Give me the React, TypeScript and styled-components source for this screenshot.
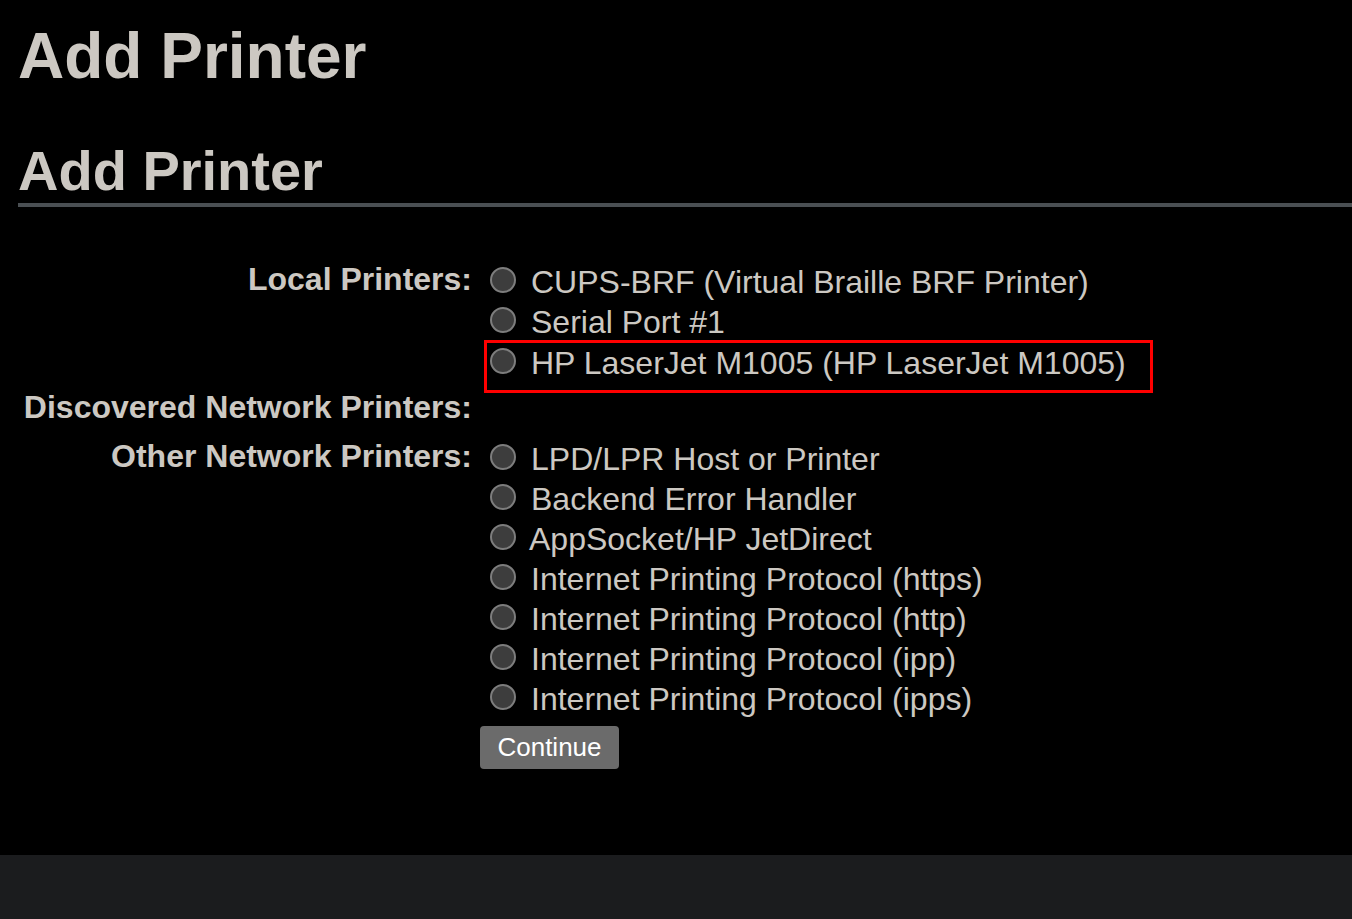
import React from "react";
import styled, { createGlobalStyle } from "styled-components";

const Global = createGlobalStyle`
  html, body { margin: 0; padding: 0; background: #1b1c1e; }
  body { font-family: "Liberation Sans", Arial, sans-serif; color: #ccc8c2; }
`;

const Page = styled.div`
  display: flex;
  flex-direction: column;
  min-height: 919px;
`;

const Main = styled.main`
  background: #000;
  height: 855px;
  display: flex;
  flex-direction: column;
`;

const Footer = styled.footer`
  flex: 1;
  background: #1b1c1e;
`;

const Title = styled.h1`
  margin: 24px 0 0 18px;
  font-size: 64px;
  line-height: 64px;
  font-weight: bold;
  color: #ccc8c2;
`;

const SubTitle = styled.h2`
  margin: 55px 0 0 18px;
  font-size: 56px;
  line-height: 56px;
  font-weight: bold;
  color: #ccc8c2;
`;

const Divider = styled.hr`
  margin: 4px 0 0 18px;
  height: 4px;
  border: none;
  background: #4a4f53;
`;

const Form = styled.form`
  margin-top: 52px;
  display: grid;
  grid-template-columns: 472px 1fr;
  column-gap: 8px;
  align-items: start;
`;

const Label = styled.div<{ $lh?: number; $mt?: number }>`
  text-align: right;
  font-weight: bold;
  font-size: 32px;
  line-height: ${(p) => p.$lh ?? 40}px;
  margin-top: ${(p) => p.$mt ?? 0}px;
  white-space: nowrap;
`;

const Options = styled.div<{ $mt?: number }>`
  display: flex;
  flex-direction: column;
  align-items: flex-start;
  padding-top: ${(p) => 3 + (p.$mt ?? 0)}px;
`;

const Option = styled.label<{ $pad?: number; $gap?: number }>`
  display: flex;
  align-items: flex-start;
  padding-left: ${(p) => p.$pad ?? 10}px;
  font-size: 32px;
  line-height: 40px;
  white-space: nowrap;
  color: #ccc8c2;
  gap: ${(p) => p.$gap ?? 15}px;
`;

const Radio = styled.input.attrs({ type: "radio" })`
  appearance: none;
  -webkit-appearance: none;
  margin: 5px 0 0 0;
  width: 26px;
  height: 26px;
  border-radius: 50%;
  border: 2px solid #7d7d7d;
  background: #3d3d3d;
  box-sizing: border-box;
  flex: none;
`;

const Highlight = styled.div`
  margin: -2px 0 0 4px;
  border: 3px solid #ff0000;
  padding: 0 24px 7px 0;
`;

const ButtonCell = styled.div`
  grid-column: 2;
  padding-top: 7px;
`;

const Button = styled.button`
  font-family: "Liberation Sans", Arial, sans-serif;
  font-size: 26px;
  line-height: 43px;
  height: 43px;
  padding: 0 16px;
  width: 139px;
  background: #6b6b6b;
  color: #ffffff;
  border: none;
  border-radius: 4px;
  text-align: center;
`;

const Empty = styled.div``;

type Item = { name: string; gap?: number };

const other: Item[] = [
  { name: "LPD/LPR Host or Printer" },
  { name: "Backend Error Handler" },
  { name: "AppSocket/HP JetDirect", gap: 13 },
  { name: "Internet Printing Protocol (https)" },
  { name: "Internet Printing Protocol (http)" },
  { name: "Internet Printing Protocol (ipp)" },
  { name: "Internet Printing Protocol (ipps)" },
];

export default function App() {
  return (
    <Page>
      <Global />
      <Main>
        <Title>Add Printer</Title>
        <SubTitle>Add Printer</SubTitle>
        <Divider />
        <Form onSubmit={(e) => e.preventDefault()}>
          <Label>Local Printers:</Label>
          <Options>
            <Option>
              <Radio name="dev" />
              CUPS-BRF (Virtual Braille BRF Printer)
            </Option>
            <Option>
              <Radio name="dev" />
              Serial Port #1
            </Option>
            <Highlight>
              <Option $pad={3}>
                <Radio name="dev" />
                HP LaserJet M1005 (HP LaserJet M1005)
              </Option>
            </Highlight>
          </Options>
          <Label $lh={28}>Discovered Network Printers:</Label>
          <Empty />
          <Label $mt={15}>Other Network Printers:</Label>
          <Options $mt={15}>
            {other.map((o) => (
              <Option key={o.name} $gap={o.gap}>
                <Radio name="dev" />
                {o.name}
              </Option>
            ))}
          </Options>
          <ButtonCell>
            <Button type="submit">Continue</Button>
          </ButtonCell>
        </Form>
      </Main>
      <Footer />
    </Page>
  );
}
